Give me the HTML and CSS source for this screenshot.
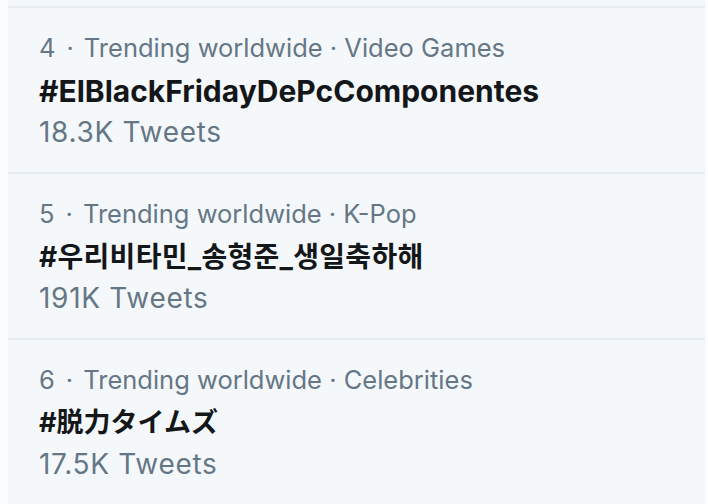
FILE: index.html
```html
<!DOCTYPE html>
<html lang="en">
<head>
<meta charset="utf-8">
<title>Trends</title>
<link rel="stylesheet" href="styles.css">
</head>
<body>
<div class="trends">
  <div class="trend">
    <div class="meta"><span>4</span><span class="dot">·</span><span>Trending worldwide · Video Games</span></div>
    <div class="title">#ElBlackFridayDePcComponentes</div>
    <div class="count">18.3K Tweets</div>
  </div>
  <div class="trend">
    <div class="meta"><span>5</span><span class="dot">·</span><span>Trending worldwide · K-Pop</span></div>
    <div class="title ko" lang="ko">#우리비타민_송형준_생일축하해</div>
    <div class="count">191K Tweets</div>
  </div>
  <div class="trend">
    <div class="meta"><span>6</span><span class="dot">·</span><span>Trending worldwide · Celebrities</span></div>
    <div class="title ja" lang="ja">#脱力タイムズ</div>
    <div class="count">17.5K Tweets</div>
  </div>
</div>
</body>
</html>
```
FILE: styles.css
```css
html, body {
  margin: 0;
  padding: 0;
  background: #fbfcfd;
  height: 100%;
  overflow: hidden;
}

.trends {
  margin-left: 8px;
  width: 697px;
  height: 504px;
  background: #f5f8fa;
  padding-top: 6px;
  box-sizing: border-box;
  font-family: "Inter", "Liberation Sans", sans-serif;
}

.trend {
  border-top: 2px solid #e6ecf0;
  padding: 24px 0 24px 31px;
}

.meta {
  font-size: 25.5px;
  line-height: 32px;
  color: #657786;
  display: flex;
}

.dot {
  padding: 0 10px 0 11px;
}

.title {
  margin-top: 9px;
  font-size: 30px;
  line-height: 36px;
  font-weight: 700;
  color: #14171a;
}

.title.ko {
  font-size: 28px;
  letter-spacing: 0.3px;
  font-family: "Inter", "Noto Sans CJK KR", sans-serif;
}

.title.ja {
  font-size: 27px;
  font-family: "Inter", "Noto Sans CJK JP", sans-serif;
}

.count {
  margin-top: 7px;
  font-size: 28px;
  line-height: 32px;
  letter-spacing: 0.7px;
  color: #657786;
}
```
